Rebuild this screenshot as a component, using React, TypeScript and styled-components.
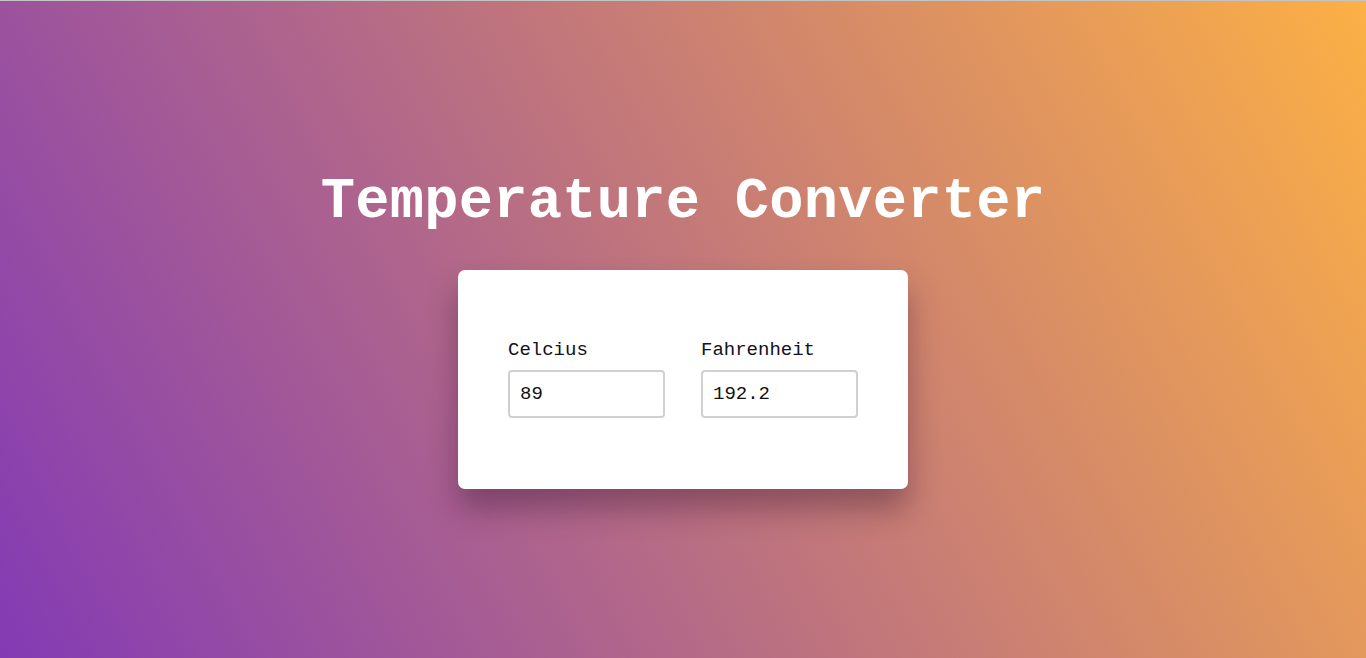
import React, { useState } from "react";
import styled, { createGlobalStyle } from "styled-components";

const GlobalStyle = createGlobalStyle`
  html, body {
    margin: 0;
    padding: 0;
    height: 100%;
  }
  body {
    font-family: "Liberation Mono", "DejaVu Sans Mono", monospace;
  }
  #root {
    height: 100%;
  }
`;

const Page = styled.main`
  box-sizing: border-box;
  min-height: 100vh;
  border-top: 1px solid #c4c4c4;
  background: linear-gradient(62deg, #833ab4 0%, #fcb045 100%);
  display: flex;
  flex-direction: column;
  align-items: center;
  padding-top: 173px;
`;

const Title = styled.h1`
  margin: 0;
  font-family: "Liberation Mono", "DejaVu Sans Mono", monospace;
  font-size: 57px;
  line-height: 1;
  font-weight: 700;
  color: #ffffff;
  letter-spacing: 0.3px;
`;

const Card = styled.section`
  box-sizing: border-box;
  margin-top: 39px;
  width: 450px;
  height: 219px;
  padding: 71px 50px;
  background: #ffffff;
  border-radius: 7px;
  box-shadow: 0 20px 30px rgba(40, 10, 40, 0.35);
  display: flex;
  gap: 36px;
`;

const Field = styled.label`
  display: flex;
  flex-direction: column;
  gap: 10px;
  width: 157px;
`;

const LabelText = styled.span`
  font-family: "Liberation Mono", "DejaVu Sans Mono", monospace;
  font-size: 19px;
  line-height: 19px;
  color: #111122;
`;

const Input = styled.input`
  box-sizing: border-box;
  width: 157px;
  height: 48px;
  border: 2px solid #d0d0d0;
  border-radius: 4px;
  padding: 0 10px;
  font-family: "Liberation Mono", "DejaVu Sans Mono", monospace;
  font-size: 19px;
  color: #111111;
  background: #ffffff;
  outline: none;
`;

export default function App() {
  const [celsius, setCelsius] = useState("89");
  const [fahrenheit, setFahrenheit] = useState("192.2");

  const onC = (v: string) => {
    setCelsius(v);
    const n = parseFloat(v);
    if (!isNaN(n)) setFahrenheit(String(Math.round((n * 9) / 5 * 10 + 320) / 10));
  };
  const onF = (v: string) => {
    setFahrenheit(v);
    const n = parseFloat(v);
    if (!isNaN(n)) setCelsius(String(Math.round(((n - 32) * 5) / 9 * 10) / 10));
  };

  return (
    <>
      <GlobalStyle />
      <Page>
        <Title>Temperature Converter</Title>
        <Card>
          <Field>
            <LabelText>Celcius</LabelText>
            <Input value={celsius} onChange={(e) => onC(e.target.value)} />
          </Field>
          <Field>
            <LabelText>Fahrenheit</LabelText>
            <Input value={fahrenheit} onChange={(e) => onF(e.target.value)} />
          </Field>
        </Card>
      </Page>
    </>
  );
}
